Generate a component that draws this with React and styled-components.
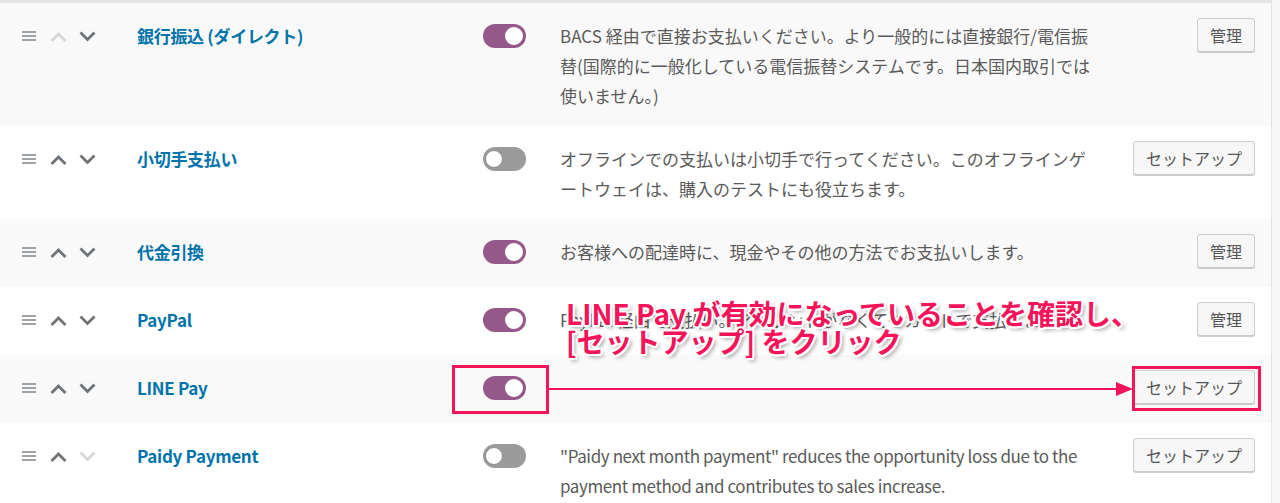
import React from "react";
import styled, { createGlobalStyle } from "styled-components";

const Global = createGlobalStyle`
  html, body { margin: 0; padding: 0; background: #f6f6f6; }
  body { font-family: "Noto Sans CJK JP", "Noto Sans", sans-serif; overflow: hidden; }
`;

const Page = styled.div`
  position: relative;
  width: 1280px;
  height: 503px;
  overflow: hidden;
`;

const Table = styled.div`
  width: 1271px;
  border-top: 3px solid #e4e4e4;
  border-right: 1px solid #e2e2e2;
  display: flex;
  flex-direction: column;
`;

const Row = styled.div`
  display: grid;
  grid-template-columns: 137px 346px 77px 540px 1fr;
  align-items: start;
  padding: 18px 0 15px;
  background: ${(p) => (p.$alt ? "#f9f9f9" : "#ffffff")};
`;

const SortCell = styled.div`
  display: flex;
  align-items: center;
  height: 30px;
  padding-left: 22px;
`;

const Title = styled.div`
  font-size: 17px;
  line-height: 30px;
  font-weight: 700;
  color: #0073aa;
  white-space: nowrap;
  letter-spacing: -0.3px;
`;

const ToggleCell = styled.div`
  height: 30px;
  display: flex;
  align-items: center;
`;

const Toggle = styled.span`
  position: relative;
  display: inline-block;
  width: 43px;
  height: 24px;
  border-radius: 12px;
  background: ${(p) => (p.$on ? "#96588a" : "#9b9b9b")};
  &::after {
    content: "";
    position: absolute;
    top: 3px;
    ${(p) => (p.$on ? "right: 3px;" : "left: 2px;")}
    width: 18px;
    height: 18px;
    border-radius: 50%;
    background: #fff;
    box-sizing: border-box;
    ${(p) => (p.$on ? "" : "border: 1px solid #8c8c8c;")}
  }
`;

const Desc = styled.div`
  font-size: 17px;
  line-height: 30px;
  color: #5a5a5a;
  letter-spacing: ${(p) => (p.$latin ? "-0.4px" : "0")};
`;

const ActionCell = styled.div`
  display: flex;
  justify-content: flex-end;
  padding-right: 16px;
  margin: -3px 0 4px;
`;

const Button = styled.button`
  height: 34px;
  padding: 0 12px;
  font-family: inherit;
  font-size: 16px;
  color: #555;
  background: #f7f7f7;
  border: 1px solid #cccccc;
  border-radius: 3px;
  box-shadow: 0 1px 0 #cccccc;
  white-space: nowrap;
`;

const IconBox = styled.svg`
  display: block;
  margin-right: ${(p) => p.$mr || 0}px;
`;

const Handle = () => (
  <IconBox width="14" height="12" viewBox="0 0 14 12" $mr={14}>
    <rect x="0" y="1" width="14" height="2" fill="#a0a3a6" />
    <rect x="0" y="5" width="14" height="2" fill="#a0a3a6" />
    <rect x="0" y="9" width="14" height="2" fill="#a0a3a6" />
  </IconBox>
);

const Chevron = ({ up, disabled, mr }) => (
  <IconBox width="17" height="11" viewBox="0 0 17 11" $mr={mr}>
    <polyline
      points={up ? "1.5,10 8.5,3 15.5,10" : "1.5,1.5 8.5,8.5 15.5,1.5"}
      fill="none"
      stroke={disabled ? "#d4d6d8" : "#6f7478"}
      strokeWidth="2.8"
    />
  </IconBox>
);

const Overlay = styled.div`
  position: absolute;
  inset: 0;
  pointer-events: none;
`;

const Callout = styled.div`
  position: absolute;
  left: 566px;
  top: 299px;
  font-size: 28px;
  line-height: 28px;
  font-weight: 700;
  color: #f5145a;
  white-space: nowrap;
  text-shadow:
    2px 0 0 #fff, -2px 0 0 #fff, 0 2px 0 #fff, 0 -2px 0 #fff,
    1.5px 1.5px 0 #fff, -1.5px 1.5px 0 #fff, 1.5px -1.5px 0 #fff, -1.5px -1.5px 0 #fff,
    3px 3px 4px rgba(0, 0, 0, 0.4);
`;

const Highlight = styled.div`
  position: absolute;
  left: ${(p) => p.$x}px;
  top: ${(p) => p.$y}px;
  width: ${(p) => p.$w}px;
  height: ${(p) => p.$h}px;
  box-sizing: border-box;
  border: 3px solid #f5145a;
`;

const ArrowLine = styled.div`
  position: absolute;
  left: 549px;
  top: 388px;
  width: 570px;
  height: 2px;
  background: #f5145a;
`;

const ArrowHead = styled.svg`
  position: absolute;
  left: 1116px;
  top: 382px;
`;

const rows = [
  {
    title: "銀行振込 (ダイレクト)",
    on: true,
    upDisabled: true,
    desc: "BACS 経由で直接お支払いください。より一般的には直接銀行/電信振替(国際的に一般化している電信振替システムです。日本国内取引では使いません。)",
    action: "管理",
  },
  {
    title: "小切手支払い",
    on: false,
    desc: "オフラインでの支払いは小切手で行ってください。このオフラインゲートウェイは、購入のテストにも役立ちます。",
    action: "セットアップ",
  },
  {
    title: "代金引換",
    on: true,
    desc: "お客様への配達時に、現金やその他の方法でお支払いします。",
    action: "管理",
  },
  {
    title: "PayPal",
    on: true,
    desc: "PayPal 経由で支払い。アカウントがなくてもカードで支払えます。",
    action: "管理",
  },
  {
    title: "LINE Pay",
    on: true,
    desc: "",
    action: "セットアップ",
  },
  {
    title: "Paidy Payment",
    on: false,
    downDisabled: true,
    latin: true,
    desc: "\"Paidy next month payment\" reduces the opportunity loss due to the payment method and contributes to sales increase.",
    action: "セットアップ",
  },
];

export default function App() {
  return (
    <Page>
      <Global />
      <Table>
        {rows.map((r, i) => (
          <Row key={r.title} $alt={i % 2 === 0}>
            <SortCell>
              <Handle />
              <Chevron up disabled={r.upDisabled} mr={12} />
              <Chevron disabled={r.downDisabled} />
            </SortCell>
            <Title>{r.title}</Title>
            <ToggleCell>
              <Toggle $on={r.on} />
            </ToggleCell>
            <Desc $latin={r.latin}>{r.desc}</Desc>
            <ActionCell>
              <Button>{r.action}</Button>
            </ActionCell>
          </Row>
        ))}
      </Table>
      <Overlay>
        <Callout>
          LINE Pay が有効になっていることを確認し、
          <br />
          [セットアップ] をクリック
        </Callout>
        <Highlight $x={452} $y={365} $w={97} $h={49} />
        <Highlight $x={1132} $y={366} $w={129} $h={45} />
        <ArrowLine />
        <ArrowHead width="17" height="14" viewBox="0 0 17 14">
          <polygon points="0,0 17,7 0,14" fill="#f5145a" />
        </ArrowHead>
      </Overlay>
    </Page>
  );
}
